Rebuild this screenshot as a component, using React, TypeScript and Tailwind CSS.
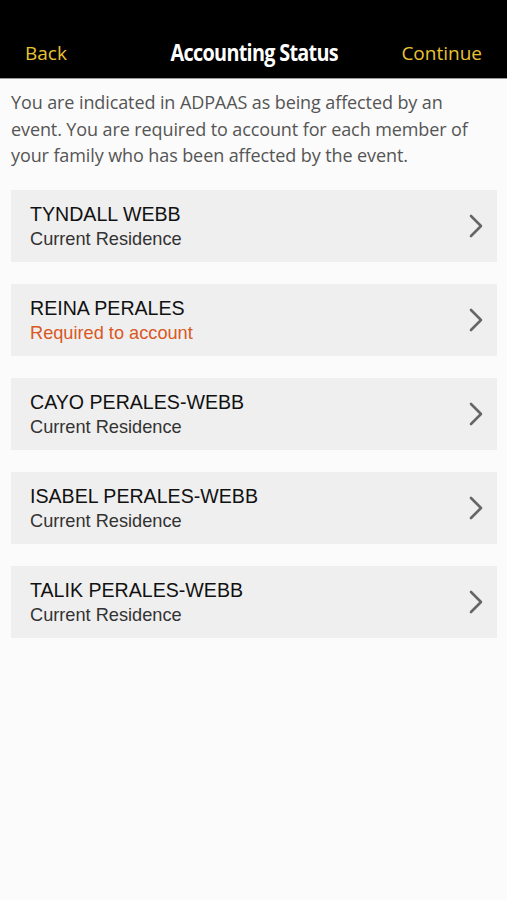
import React from "react";

const people = [
  { name: "TYNDALL WEBB", status: "Current Residence", req: false },
  { name: "REINA PERALES", status: "Required to account", req: true },
  { name: "CAYO PERALES-WEBB", status: "Current Residence", req: false },
  { name: "ISABEL PERALES-WEBB", status: "Current Residence", req: false },
  { name: "TALIK PERALES-WEBB", status: "Current Residence", req: false },
];

export default function App() {
  return (
    <div className="w-[507px] h-[900px] bg-[#fbfbfb] flex flex-col" style={{ fontFamily: '"Open Sans", sans-serif' }}>
      <div className="h-[79px] bg-black border-b border-[#9a9a9a] flex items-end pb-[12px] px-[25px] justify-between">
        <span className="text-[#e8c333] text-[19px] leading-[26px]">Back</span>
        <span className="text-white text-[23px] font-bold leading-[28px] tracking-[-0.8px] ml-[40px] inline-block origin-center scale-x-[0.86]">Accounting Status</span>
        <span className="text-[#e8c333] text-[19px] leading-[26px]">Continue</span>
      </div>
      <p className="px-[11px] pt-[10px] text-[18px] leading-[26.5px] text-[#555555] tracking-[-0.1px]">
        You are indicated in ADPAAS as being affected by an event. You are required to account for each member of your family who has been affected by the event.
      </p>
      <div className="flex flex-col gap-[22px] pl-[11px] pr-[10px] mt-[21px]" style={{ fontFamily: '"Liberation Sans", Arial, sans-serif' }}>
        {people.map((p) => (
          <div key={p.name} className="h-[72px] bg-[#efefef] flex items-center pl-[19px] pr-[13px]">
            <div className="flex-1 flex flex-col pt-[2px]">
              <span className="text-[19.6px] leading-[25px] text-[#111111]">{p.name}</span>
              <span className={"text-[18.2px] leading-[25px] " + (p.req ? "text-[#d9581f]" : "text-[#333333]")}>{p.status}</span>
            </div>
            <svg width="16" height="24" viewBox="0 0 16 24" fill="none">
              <path d="M3 2 L13 12 L3 22" stroke="#666666" strokeWidth="2.6" strokeLinecap="round" strokeLinejoin="round" />
            </svg>
          </div>
        ))}
      </div>
    </div>
  );
}
